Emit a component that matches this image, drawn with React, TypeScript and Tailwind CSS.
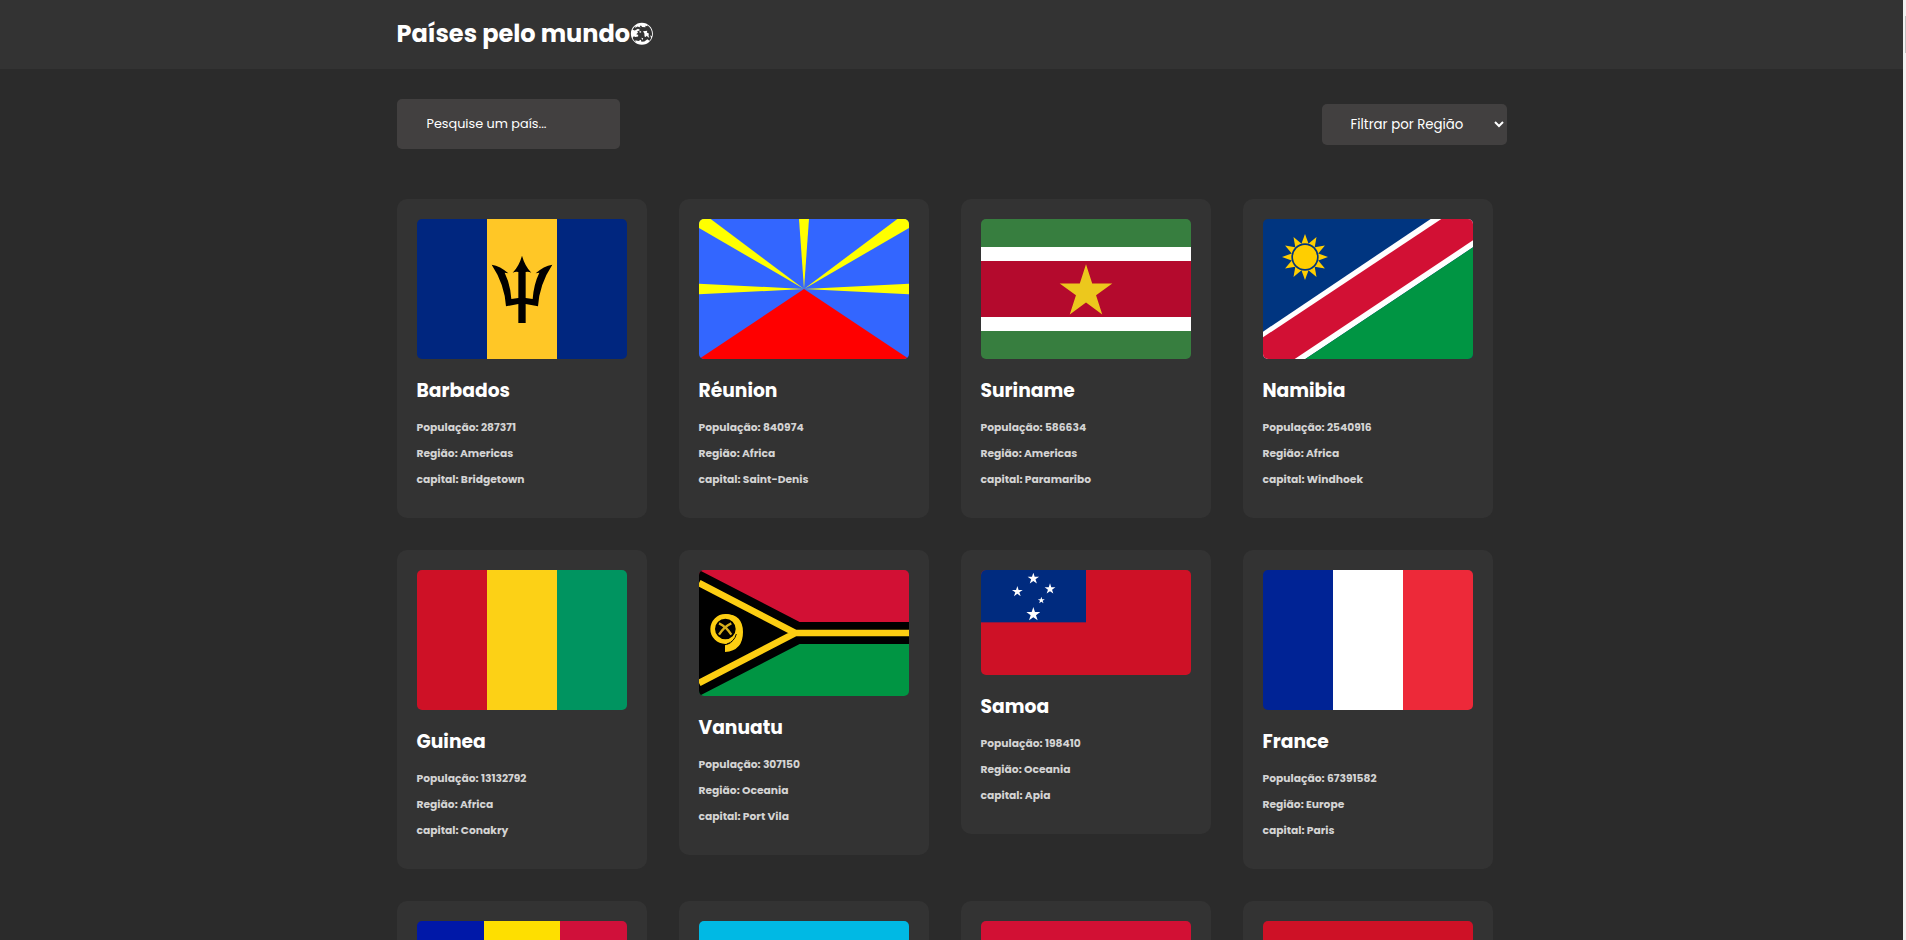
import type { ReactNode } from "react";
import { GiWorld } from "react-icons/gi";

type Country = {
  name: string;
  population: number;
  region: string;
  capital: string;
  height: string;
  flag: ReactNode;
  viewBox: string;
};

function starPoints(cx: number, cy: number, r: number) {
  return Array.from({ length: 10 }, (_, i) => {
    const radius = i % 2 === 0 ? r : r * 0.382;
    const angle = -Math.PI / 2 + (i * Math.PI) / 5;
    return `${(cx + radius * Math.cos(angle)).toFixed(2)},${(cy + radius * Math.sin(angle)).toFixed(2)}`;
  }).join(" ");
}

function Star({ cx, cy, r, fill }: { cx: number; cy: number; r: number; fill: string }) {
  return <polygon points={starPoints(cx, cy, r)} fill={fill} />;
}

function Vertical({ colors }: { colors: [string, string, string] }) {
  return (
    <g shapeRendering="crispEdges">
      <rect width="210" height="420" fill={colors[0]} />
      <rect x="210" width="210" height="420" fill={colors[1]} />
      <rect x="420" width="210" height="420" fill={colors[2]} />
    </g>
  );
}

const barbados = (
  <>
    <Vertical colors={["#00267f", "#ffc726", "#00267f"]} />
    <path d="M315 110 Q324 142 343 161 Q334 157 326 159 V237 L347 240 Q350 196 367 161 L356 163 Q380 141 406 137 Q367 196 363 262 L326 255 V312 H304 V255 L267 262 Q263 196 224 137 Q250 141 274 163 L263 161 Q280 196 283 240 L304 237 V159 Q296 157 287 161 Q306 142 315 110 Z" />
  </>
);

const reunion = (
  <>
    <rect width="630" height="420" fill="#3366ff" />
    <g fill="#ffff00">
      <polygon points="315,210 300,0 330,0" />
      <polygon points="315,210 0,27 0,0 35,0" />
      <polygon points="315,210 630,27 630,0 595,0" />
      <polygon points="315,210 0,194 0,226" />
      <polygon points="315,210 630,194 630,226" />
    </g>
    <polygon points="315,210 0,420 630,420" fill="#ff0000" />
  </>
);

const suriname = (
  <>
    <rect width="630" height="420" fill="#377e3f" />
    <rect y="84" width="630" height="252" fill="#ffffff" />
    <rect y="126" width="630" height="168" fill="#b40a2d" />
    <Star cx={315} cy={219} r={83} fill="#ecc81d" />
  </>
);

const namibia = (
  <>
    <rect width="630" height="420" fill="#003580" />
    <polygon points="0,338 503,0 630,0 630,85 127,420 0,420" fill="#ffffff" />
    <polygon points="630,85 630,420 127,420" fill="#009543" />
    <polygon points="0,355 535,0 630,0 630,64 95,420 0,420" fill="#d21034" />
    <g fill="#ffce00">
      {Array.from({ length: 12 }, (_, i) => (
        <polygon key={i} points="126,45 114,78 138,78" transform={`rotate(${i * 30} 126 114)`} />
      ))}
      <circle cx="126" cy="114" r="41" fill="#003580" />
      <circle cx="126" cy="114" r="36" />
    </g>
  </>
);

const vanuatu = (
  <>
    <rect width="630" height="189" fill="#d21034" />
    <rect y="189" width="630" height="189" fill="#009543" />
    <polygon points="0,0 302,156 630,156 630,222 302,222 0,378" fill="#000000" />
    <path d="M0 39 L289 189 L0 339 M280 189 H630" fill="none" stroke="#fdce12" strokeWidth="20" />
    <path d="M80 132 Q132 134 132 186 Q132 242 78 246 V226 Q106 222 112 190 Z" fill="#fdce12" />
    <circle cx="79" cy="177" r="38" fill="#000000" stroke="#fdce12" strokeWidth="14" />
    <path d="M84 222 Q106 215 112 192" fill="none" stroke="#000000" strokeWidth="3" />
    <path d="M60 160 Q81 169 97 194 M97 160 Q76 169 60 194" fill="none" stroke="#d5ad1b" strokeWidth="7" />
  </>
);

const samoa = (
  <>
    <rect width="630" height="315" fill="#ce1126" />
    <rect width="315" height="157" fill="#002b7f" />
    <Star cx={157} cy={26} r={18} fill="#ffffff" />
    <Star cx={109} cy={65} r={17} fill="#ffffff" />
    <Star cx={207} cy={57} r={17} fill="#ffffff" />
    <Star cx={181} cy={91} r={11} fill="#ffffff" />
    <Star cx={157} cy={133} r={22} fill="#ffffff" />
  </>
);

const andorra = (
  <g shapeRendering="crispEdges">
    <rect width="201" height="420" fill="#0018a8" />
    <rect x="201" width="228" height="420" fill="#fedf00" />
    <rect x="429" width="201" height="420" fill="#d0103a" />
  </g>
);

const wide = "0 0 630 420";

const countries: Country[] = [
  { name: "Barbados", population: 287371, region: "Americas", capital: "Bridgetown", height: "h-[140px]", flag: barbados, viewBox: wide },
  { name: "Réunion", population: 840974, region: "Africa", capital: "Saint-Denis", height: "h-[140px]", flag: reunion, viewBox: wide },
  { name: "Suriname", population: 586634, region: "Americas", capital: "Paramaribo", height: "h-[140px]", flag: suriname, viewBox: wide },
  { name: "Namibia", population: 2540916, region: "Africa", capital: "Windhoek", height: "h-[140px]", flag: namibia, viewBox: wide },
  { name: "Guinea", population: 13132792, region: "Africa", capital: "Conakry", height: "h-[140px]", flag: <Vertical colors={["#ce1126", "#fcd116", "#009460"]} />, viewBox: wide },
  { name: "Vanuatu", population: 307150, region: "Oceania", capital: "Port Vila", height: "h-[126px]", flag: vanuatu, viewBox: "0 0 630 378" },
  { name: "Samoa", population: 198410, region: "Oceania", capital: "Apia", height: "h-[105px]", flag: samoa, viewBox: "0 0 630 315" },
  { name: "France", population: 67391582, region: "Europe", capital: "Paris", height: "h-[140px]", flag: <Vertical colors={["#002395", "#ffffff", "#ed2939"]} />, viewBox: wide },
];

const nextRow: ReactNode[] = [
  andorra,
  <rect width="630" height="420" fill="#00b9e4" />,
  <rect width="630" height="420" fill="#d21034" />,
  <rect width="630" height="420" fill="#ce1126" />,
];

function Flag({ viewBox, height, children }: { viewBox: string; height: string; children: ReactNode }) {
  return (
    <svg viewBox={viewBox} preserveAspectRatio="none" className={`block w-[210px] rounded-[5px] ${height}`}>
      {children}
    </svg>
  );
}

function CountryCard({ country }: { country: Country }) {
  return (
    <article className="w-[250px] rounded-[10px] bg-[#333333] px-5 pt-5 pb-[31px]">
      <Flag viewBox={country.viewBox} height={country.height}>
        {country.flag}
      </Flag>
      <h3 className="mt-[18px] text-[18.72px] leading-[27px] font-bold text-white">{country.name}</h3>
      <div className="mt-4 flex flex-col gap-[11px] text-[10.72px] leading-[15px] font-bold text-[#d3d3d3]">
        <h6>População: {country.population}</h6>
        <h6>Região: {country.region}</h6>
        <h6>capital: {country.capital}</h6>
      </div>
    </article>
  );
}

export default function App() {
  return (
    <div className="flex h-[940px] overflow-hidden bg-[#2b2b2b] font-['Poppins','Inter',sans-serif] text-white">
      <div className="min-w-0 flex-1">
        <header className="h-[69px] bg-[#333333]">
          <div className="mx-auto flex w-[1110px] items-start pt-[17px]">
            <h1 className="text-[24px] leading-[33px] font-bold whitespace-nowrap">Países pelo mundo</h1>
            <GiWorld className="mt-[5px] size-6" />
          </div>
        </header>
        <main className="mx-auto w-[1110px]">
          <div className="mt-[30px] flex h-[50px] items-center justify-between">
            <input
              type="text"
              placeholder="Pesquise um país..."
              className="h-[50px] w-[223px] rounded-[5px] bg-[#424040] pr-4 pl-[30px] text-[12.8px] outline-none placeholder:text-white"
            />
            <select className="mt-px h-[41px] w-[185px] rounded-[5px] border-0 bg-[#424040] pl-[25px] text-[13.333px] text-white outline-none">
              <option>Filtrar por Região</option>
              <option>Africa</option>
              <option>Americas</option>
              <option>Asia</option>
              <option>Europe</option>
              <option>Oceania</option>
            </select>
          </div>
          <div className="mt-[50px] grid grid-cols-[repeat(4,250px)] items-start gap-8">
            {countries.map((country) => (
              <CountryCard key={country.name} country={country} />
            ))}
            {nextRow.map((flag, index) => (
              <article key={index} className="w-[250px] rounded-[10px] bg-[#333333] p-5">
                <Flag viewBox={wide} height="h-[140px]">
                  {flag}
                </Flag>
              </article>
            ))}
          </div>
        </main>
      </div>
      <div className="w-[3px] bg-[#f1f1f1] pt-4 pl-[2px]">
        <div className="h-[37px] bg-[#c1c1c1]" />
      </div>
    </div>
  );
}
